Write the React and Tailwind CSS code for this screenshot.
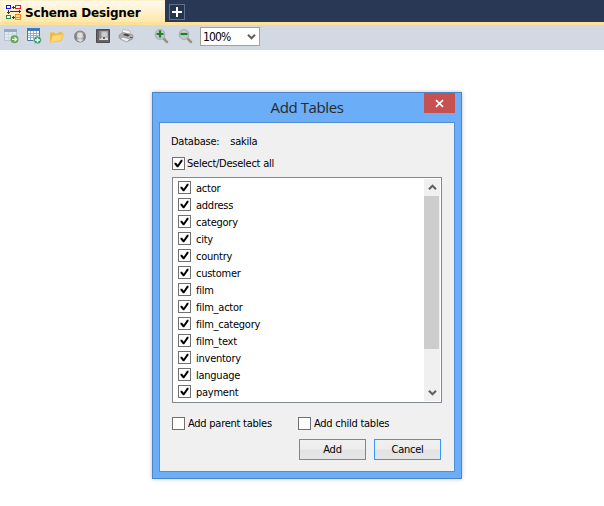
import React from "react";

const TABLES = [
  "actor", "address", "category", "city", "country", "customer", "film",
  "film_actor", "film_category", "film_text", "inventory", "language", "payment",
];

function Check({ checked }) {
  return (
    <span className="flex h-[13px] w-[13px] shrink-0 items-center justify-center border border-[#707070] bg-white">
      {checked && (
        <svg width="11" height="11" viewBox="0 0 11 11">
          <path d="M1.500 4.800h1.600L4.700 6.700 8 1.800h1.500v1.500L5.200 9.300H4L1.500 6.300z" fill="#000" />
        </svg>
      )}
    </span>
  );
}

function SchemaIcon() {
  return (
    <svg width="16" height="16" viewBox="0 1 16 16" fill="none" shapeRendering="crispEdges">
      <rect x=".5" y="1.500" width="4" height="3" fill="#fff" stroke="#1010f0" />
      <rect x="9.500" y="1.500" width="5" height="3" fill="#fff" stroke="#dc1b2c" />
      <rect x=".5" y="11.500" width="4" height="3" fill="#fff" stroke="#278a45" />
      <path d="M9.500 10.500h5v5h-5zM9.500 13h5" fill="#ffe0a0" stroke="#f28a1c" />
      <path d="M6 3.500h3M7.500 2v3M2.500 6v4M1 8.500h3M4 7.500h8M13.500 6v3M12 7.500h3M6 13.500h3M7.500 12v3" stroke="#333" />
    </svg>
  );
}

function TableGoIcon() {
  return (
    <svg width="16" height="16" viewBox="0 0 16 16">
      <path d="M1.500 1.500h12v11h-12z" fill="#dfe8ec" stroke="#b4c4cf" />
      <path d="M1 1h13v3H1z" fill="#8eaec6" />
      <path d="M2 6.500h11M2 9.500h11M5.500 4v8M9.500 4v8" stroke="#cfdadd" />
      <circle cx="11.500" cy="11.300" r="4" fill="#68a460" />
      <path d="M9 11.300h4.500M11.500 9.200l2.200 2.100-2.200 2.100" fill="none" stroke="#e8f5e4" strokeWidth="1.300" />
    </svg>
  );
}

function TableAddIcon() {
  return (
    <svg width="16" height="16" viewBox="0 0 16 16">
      <path d="M1.500.5h12v12h-12z" fill="#fff" stroke="#4678b0" />
      <path d="M1 0h13v3H1z" fill="#427ab6" />
      <path d="M2 5.500h11M2 7.500h11M2 9.500h11M4.500 3v9M7.500 3v9M10.500 3v9" stroke="#7ca2cb" strokeWidth=".8" />
      <circle cx="11.500" cy="12" r="3.900" fill="#2b8c68" stroke="#e8f4f0" strokeWidth=".6" />
      <path d="M9 12h5M11.500 9.500v5" stroke="#fff" strokeWidth="1.700" />
    </svg>
  );
}

function FolderIcon() {
  return (
    <svg width="16" height="16" viewBox="0 0 16 16">
      <path d="M1 14V4.500h4l2 1.500 5-2.500L14 6v2l-1.500 5z" fill="#f2b83c" />
      <path d="M3.500 7.500 14.800 6 12 12.700 1.200 14.500z" fill="#ffda72" stroke="#efb745" strokeWidth=".6" />
    </svg>
  );
}

function RefreshIcon() {
  return (
    <svg width="16" height="16" viewBox="0 0 16 16">
      <circle cx="8" cy="8.500" r="5.300" fill="#b5b5b5" stroke="#858585" strokeWidth="1.300" />
      <path d="M4.500 10.800a4.300 4.300 0 0 1 0-5M11.500 6.200a4.300 4.300 0 0 1 0 5" fill="none" stroke="#777" strokeWidth="1.200" />
      <circle cx="8" cy="7.500" r="2.700" fill="#dedede" />
      <path d="M5 12.500 8 10.500l3 2-2.500 1.500z" fill="#ddd" />
    </svg>
  );
}

function PictureIcon() {
  return (
    <svg width="16" height="16" viewBox="0 0 16 16">
      <path d="M1.500 1.500h13v13h-13z" fill="#666" stroke="#4b4b4b" />
      <path d="M4 3h9v9H4z" fill="#a8a8a8" />
      <path d="M4 3h2v7H4z" fill="#8b8b8b" />
      <circle cx="9.500" cy="6.500" r="2.800" fill="#ccc" />
      <path d="m4 12 3-2 1-1 2 1 3-.5V12z" fill="#e0e0e0" />
      <path d="M8 9h2v2H8z" fill="#666" />
    </svg>
  );
}

function PrinterIcon() {
  return (
    <svg width="16" height="16" viewBox="0 0 16 16">
      <path d="m4 5 1-3.500 6 1L13 6z" fill="#f8f8f8" stroke="#aaa" strokeWidth=".7" />
      <path d="m1 7 4-2.500 10 2.500v3.500L11 13 1 10z" fill="#b0b0b0" stroke="#888" strokeWidth=".6" />
      <path d="m5 7 2-1.500 5 1.500-2 1.500z" fill="#444" />
      <path d="m2 11 3-2 7 2-3 3z" fill="#eee" stroke="#888" strokeWidth=".6" />
      <path d="M12 9.500h2.500" stroke="#555" />
    </svg>
  );
}

function ZoomIcon({ plus }) {
  return (
    <svg width="16" height="16" viewBox="0 0 16 16">
      <path d="m10.500 10.500 3.500 3.500" stroke="#9a928c" strokeWidth="2.500" strokeLinecap="round" />
      <circle cx="7" cy="6.500" r="4.800" fill="#c0cbca" stroke="#aab2b5" strokeWidth="1.200" />
      <path d={plus ? "M3.500 6h7M7 2.500v7" : "M3.500 6h7"} stroke="#198528" strokeWidth="2.200" />
    </svg>
  );
}

function Chevron({ up }) {
  return (
    <svg width="9" height="7" viewBox="0 0 9 7">
      <path d={up ? "M1 5.200 4.500 1.800 8 5.200" : "M1 1.800 4.500 5.200 8 1.800"} fill="none" stroke="#606060" strokeWidth="2.100" />
    </svg>
  );
}

function DialogButton({ children }) {
  return (
    <button className="flex h-[21px] w-[67px] items-center justify-center border border-[#3399ff] bg-[linear-gradient(#f0f0f0_0%,#ededed_48%,#e3e3e3_52%,#e5e5e5_100%)]">
      {children}
    </button>
  );
}

export default function App() {
  return (
    <div className="flex h-[506px] w-[604px] flex-col overflow-hidden bg-white font-['DejaVu_Sans_Condensed','DejaVu_Sans',sans-serif] text-[11px] leading-[17px] tracking-[-0.25px] text-black [font-stretch:condensed]">
      <div className="flex h-[22px] shrink-0 bg-[#293955]">
        <div className="flex w-[165px] items-center border-t border-l border-[#fff0c8] bg-linear-to-b from-[#fffaf0] to-[#ffe7a8] pt-[3px] pl-[5px]">
          <SchemaIcon />
          <span className="ml-[3px] font-['DejaVu_Sans',sans-serif] text-[12px] leading-[16px] font-bold tracking-[-0.15px] whitespace-nowrap [font-stretch:normal]">Schema Designer</span>
        </div>
        <div className="mt-[4px] ml-[4px] flex h-[16px] w-[16px] items-center justify-center border border-[#60708a] bg-[#26354e]">
          <svg width="12" height="12" viewBox="0 0 12 12" shapeRendering="crispEdges"><path d="M1 6h10M6 1v10" stroke="#fff" strokeWidth="2" /></svg>
        </div>
      </div>
      <div className="h-[3px] shrink-0 bg-[#ffe29a]" />
      <div className="flex h-[25px] shrink-0 items-start bg-[#d3d9e3] pt-[3px] pl-[3px]">
        <div className="flex gap-[7px]">
          <TableGoIcon /><TableAddIcon /><FolderIcon /><RefreshIcon /><PictureIcon /><PrinterIcon />
        </div>
        <div className="ml-[19px] flex gap-[8px]"><ZoomIcon plus /><ZoomIcon /></div>
        <div className="-mt-px ml-[7px] flex h-[19px] w-[60px] items-center justify-between border border-[#a0a0a0] bg-white pr-[3px] pl-[2px] text-[12px] tracking-[-0.9px]">
          <span className="pt-px">100%</span><Chevron />
        </div>
      </div>

      <div className="mt-[42px] ml-[152px] flex h-[387px] w-[310px] shrink-0 flex-col border border-[#4b86c8] bg-[#6badf6] px-[6px] pb-[6px] shadow-[0_0_4px_rgba(0,0,0,0.25)]">
        <div className="flex h-[29px] shrink-0">
          <div className="w-[31px]" />
          <div className="flex-1 text-center font-['Open_Sans',sans-serif] text-[15px] leading-[29px] tracking-[-0.4px] text-[#252a30] [font-stretch:normal]">Add Tables</div>
          <div className="flex h-[20px] w-[31px] items-center justify-center bg-[#c75050]">
            <svg width="9" height="9" viewBox="0 0 9 9"><path d="m1 1.200 7 6.600M8 1.200 1 7.800" stroke="#fff" strokeWidth="1.700" /></svg>
          </div>
        </div>
        <div className="flex flex-1 flex-col border border-[#508fd4] bg-[#f0f0f0] px-[12px]">
          <div className="mt-[10px] -ml-px flex h-[17px] gap-[11px]"><span>Database:</span><span>sakila</span></div>
          <div className="mt-[6px] flex h-[15px] items-center gap-[2px]"><Check checked /><span>Select/Deselect all</span></div>
          <div className="mt-[6px] flex h-[226px] w-[270px] shrink-0 border border-[#828790] bg-white">
            <div className="flex-1 pt-[2px] pl-[5px]">
              {TABLES.map((name) => (
                <div key={name} className="flex h-[17px] items-start gap-[5px] pt-px"><Check checked /><span className="leading-[15px]">{name}</span></div>
              ))}
            </div>
            <div className="my-px mr-px flex w-[16px] flex-col items-center bg-[#f0f0f0]">
              <div className="flex h-[17px] items-center"><Chevron up /></div>
              <div className="h-[153px] w-[15px] self-start bg-[#cdcdcd]" />
              <div className="mt-auto flex h-[17px] items-center"><Chevron /></div>
            </div>
          </div>
          <div className="mt-[13px] flex h-[15px] items-center">
            <div className="flex w-[126px] items-center gap-[3px] whitespace-nowrap"><Check /><span>Add parent tables</span></div>
            <div className="flex items-center gap-[3px] whitespace-nowrap"><Check /><span>Add child tables</span></div>
          </div>
          <div className="mt-[8px] flex gap-[8px] pl-[127px]">
            <DialogButton>Add</DialogButton>
            <DialogButton>Cancel</DialogButton>
          </div>
        </div>
      </div>
    </div>
  );
}
